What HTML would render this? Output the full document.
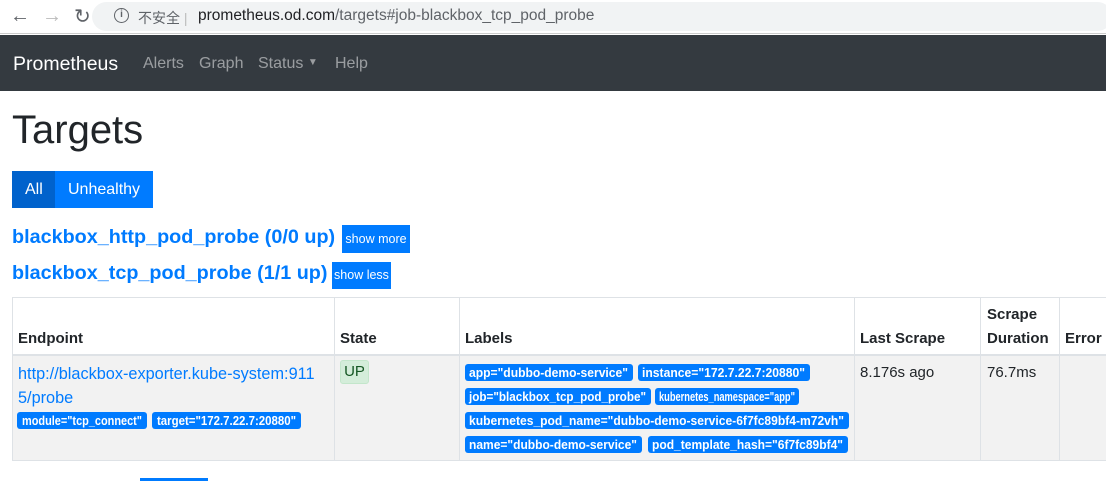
<!DOCTYPE html>
<html><head><meta charset="utf-8"><style>
*{box-sizing:border-box;margin:0;padding:0}
body{width:1106px;height:481px;overflow:hidden;background:#fff;font-family:"Liberation Sans","Noto Sans CJK SC",sans-serif;color:#212529;position:relative}
.a{position:absolute;white-space:nowrap}
.chrome{position:absolute;left:0;top:0;width:1106px;height:34px;background:#fff;border-bottom:1px solid #ccc}
.url{position:absolute;left:92px;top:2px;width:1020px;height:29px;background:#f1f3f4;border-radius:15px}
.nav{position:absolute;left:0;top:35px;width:1106px;height:56px;background:#343a40}
svg.b{position:absolute;height:17px;overflow:visible}
svg.b text{font-family:"Liberation Sans",sans-serif;font-weight:bold;font-size:12.5px;fill:#fff}
.vl{position:absolute;width:1px;background:#dee2e6}
</style></head><body>
<div class="chrome"><div class="url"></div></div>
<div class="a" style="left:10px;top:5px;font-size:20px;color:#5f6368">&#8592;</div>
<div class="a" style="left:42px;top:5px;font-size:20px;color:#bbb">&#8594;</div>
<div class="a" style="left:74px;top:4px;font-size:20px;color:#5f6368">&#8635;</div>
<div class="a" style="left:114px;top:8px;width:15px;height:15px;border:1.5px solid #5f6368;border-radius:50%;font-size:10px;text-align:center;line-height:12px;color:#5f6368;font-weight:bold">i</div>
<div class="a" style="left:138px;top:8px;font-size:14px;color:#5f6368">不安全 <span style="color:#bbb">|</span></div>
<div class="a" style="left:198px;top:7px;font-size:15.5px;color:#202124">prometheus.od.com<span style="color:#5f6368">/targets#job-blackbox_tcp_pod_probe</span></div>
<div class="nav"></div>
<div class="a" style="left:13px;top:53px;font-size:19.5px;color:#fff">Prometheus</div>
<div class="a" style="left:143px;top:55px;font-size:16px;color:rgba(255,255,255,.5)">Alerts</div>
<div class="a" style="left:199px;top:55px;font-size:16px;color:rgba(255,255,255,.5)">Graph</div>
<div class="a" style="left:258px;top:55px;font-size:16px;color:rgba(255,255,255,.5)">Status <span style="font-size:10px;position:relative;top:-3px">&#9660;</span></div>
<div class="a" style="left:335px;top:55px;font-size:16px;color:rgba(255,255,255,.5)">Help</div>
<div class="a" style="left:12px;top:108px;font-size:40px;font-weight:500;color:#212529">Targets</div>
<div class="a" style="left:12px;top:171px;width:43px;height:37px;background:#0062cc"></div>
<div class="a" style="left:55px;top:171px;width:98px;height:37px;background:#007bff"></div>
<div class="a" style="left:25px;top:181px;font-size:16px;color:#fff">All</div>
<div class="a" style="left:68px;top:181px;font-size:16px;color:#fff">Unhealthy</div>
<div class="a" style="left:12px;top:226px;font-size:19.8px;font-weight:bold;color:#007bff">blackbox_http_pod_probe (0/0 up)</div>
<div class="a" style="left:342px;top:225px;width:68px;height:28px;background:#007bff;color:#fff;font-size:12.5px;text-align:center;line-height:28px">show more</div>
<div class="a" style="left:12px;top:262px;font-size:19.8px;font-weight:bold;color:#007bff">blackbox_tcp_pod_probe (1/1 up)</div>
<div class="a" style="left:332px;top:262px;width:59px;height:27px;background:#007bff;color:#fff;font-size:12.5px;text-align:center;line-height:27px">show less</div>
<div class="a" style="left:12px;top:297px;width:1100px;height:164px;border:1px solid #dee2e6;border-right:none"></div>
<div class="a" style="left:13px;top:356px;width:1093px;height:104px;background:#f2f2f2"></div>
<div class="a" style="left:12px;top:354px;width:1094px;height:2px;background:#dee2e6"></div>
<div class="vl" style="left:334px;top:297px;height:164px"></div>
<div class="vl" style="left:459px;top:297px;height:164px"></div>
<div class="vl" style="left:854px;top:297px;height:164px"></div>
<div class="vl" style="left:980px;top:297px;height:164px"></div>
<div class="vl" style="left:1059px;top:297px;height:164px"></div>
<div class="a" style="left:18px;top:330px;font-size:15px;font-weight:bold">Endpoint</div>
<div class="a" style="left:340px;top:330px;font-size:15px;font-weight:bold">State</div>
<div class="a" style="left:465px;top:330px;font-size:15px;font-weight:bold">Labels</div>
<div class="a" style="left:860px;top:330px;font-size:15px;font-weight:bold">Last Scrape</div>
<div class="a" style="left:987px;top:303px;font-size:15px;font-weight:bold;line-height:24px">Scrape<br>Duration</div>
<div class="a" style="left:1065px;top:330px;font-size:15px;font-weight:bold">Error</div>
<div class="a" style="left:18px;top:362px;font-size:16.3px;color:#007bff;line-height:24px">http://blackbox-exporter.kube-system:911<br>5/probe</div>
<svg class="b" style="left:17px;top:412px" width="130"><rect width="130" height="17" rx="3" fill="#007bff"/><text x="5" y="13" textLength="120" lengthAdjust="spacingAndGlyphs">module="tcp_connect"</text></svg>
<svg class="b" style="left:152px;top:412px" width="149"><rect width="149" height="17" rx="3" fill="#007bff"/><text x="5" y="13" textLength="139" lengthAdjust="spacingAndGlyphs">target="172.7.22.7:20880"</text></svg>
<div class="a" style="left:340px;top:360px;width:29px;height:24px;background:#d4edda;border:1px solid #c3e6cb;border-radius:3px;color:#155724;font-size:15px;text-align:center;line-height:22px">UP</div>
<svg class="b" style="left:465px;top:364px" width="168"><rect width="168" height="17" rx="3" fill="#007bff"/><text x="4" y="13" textLength="159" lengthAdjust="spacingAndGlyphs">app="dubbo-demo-service"</text></svg>
<svg class="b" style="left:638px;top:364px" width="172"><rect width="172" height="17" rx="3" fill="#007bff"/><text x="4" y="13" textLength="163" lengthAdjust="spacingAndGlyphs">instance="172.7.22.7:20880"</text></svg>
<svg class="b" style="left:465px;top:388px" width="186"><rect width="186" height="17" rx="3" fill="#007bff"/><text x="4" y="13" textLength="177" lengthAdjust="spacingAndGlyphs">job="blackbox_tcp_pod_probe"</text></svg>
<svg class="b" style="left:655px;top:388px" width="144"><rect width="144" height="17" rx="3" fill="#007bff"/><text x="4" y="13" textLength="136" lengthAdjust="spacingAndGlyphs">kubernetes_namespace="app"</text></svg>
<svg class="b" style="left:465px;top:412px" width="384"><rect width="384" height="17" rx="3" fill="#007bff"/><text x="4" y="13" textLength="375" lengthAdjust="spacingAndGlyphs">kubernetes_pod_name="dubbo-demo-service-6f7fc89bf4-m72vh"</text></svg>
<svg class="b" style="left:465px;top:436px" width="177"><rect width="177" height="17" rx="3" fill="#007bff"/><text x="4" y="13" textLength="168" lengthAdjust="spacingAndGlyphs">name="dubbo-demo-service"</text></svg>
<svg class="b" style="left:648px;top:436px" width="200"><rect width="200" height="17" rx="3" fill="#007bff"/><text x="4" y="13" textLength="191" lengthAdjust="spacingAndGlyphs">pod_template_hash="6f7fc89bf4"</text></svg>
<div class="a" style="left:860px;top:364px;font-size:15px">8.176s ago</div>
<div class="a" style="left:987px;top:364px;font-size:15px">76.7ms</div>
<div class="a" style="left:140px;top:478px;width:68px;height:3px;background:#007bff"></div>
</body></html>
